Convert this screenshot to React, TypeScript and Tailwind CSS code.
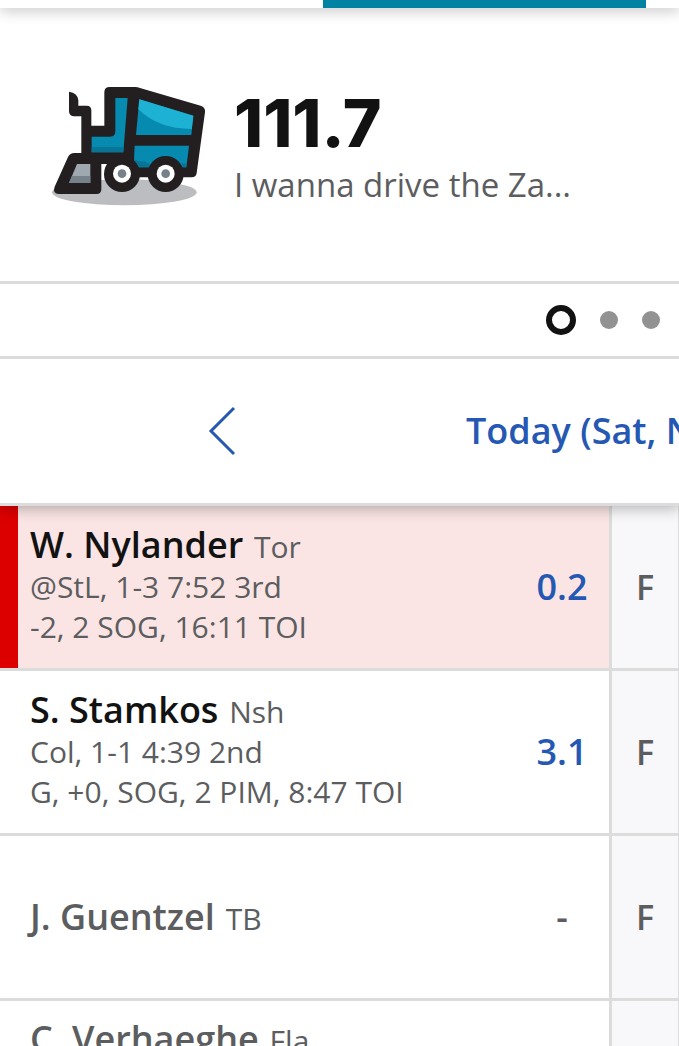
import React from "react";

type Player = {
  name: string;
  team: string;
  game?: string;
  stats?: string;
  points: string;
  position: string;
  flagged?: boolean;
  started?: boolean;
};

const players: Player[] = [
  {
    name: "W. Nylander",
    team: "Tor",
    game: "@StL, 1-3 7:52 3rd",
    stats: "-2, 2 SOG, 16:11 TOI",
    points: "0.2",
    position: "F",
    flagged: true,
    started: true,
  },
  {
    name: "S. Stamkos",
    team: "Nsh",
    game: "Col, 1-1 4:39 2nd",
    stats: "G, +0, SOG, 2 PIM, 8:47 TOI",
    points: "3.1",
    position: "F",
    started: true,
  },
  { name: "J. Guentzel", team: "TB", points: "-", position: "F" },
];

function IceResurfacer() {
  return (
    <svg viewBox="0 0 540 420" className="h-[140px] w-[180px] shrink-0" aria-hidden="true">
      <ellipse cx="253" cy="352" rx="217" ry="39" fill="#bcbdc0" />
      <path
        fill="#231f20"
        d="M87 50Q113 53 115 76V92H140Q154 92 154 106V152H193V52Q193 36 209 36H286Q293 36 300 39L482 92Q497 97 495 112L470 294Q468 307 455 307H240L200 267H184V343Q184 357 170 357H56Q37 355 44 335L84 246Q90 234 103 234H124V124H101Q87 122 87 108Z"
      />
      <path fill="#078aaf" d="M226 69H263L250 232H155V185H210Q226 185 226 169Z" />
      <path fill="#087596" d="M155 216H251L250 232H155Z" />
      <path fill="#078aaf" d="M298 73L460 122L454 180H288Z" />
      <path fill="#1db2d3" d="M298 73L460 122L455 162Q355 162 295 103Z" />
      <path fill="#078aaf" d="M284 212H447L439 277H281Z" />
      <path fill="#087596" d="M282 253Q298 262 315 259L340 277H281Z" />
      <path fill="#087596" d="M425 264Q432 267 440 264L439 277H425Z" />
      <circle cx="246" cy="297" r="54" fill="#231f20" />
      <circle cx="377" cy="297" r="54" fill="#231f20" />
      <circle cx="246" cy="296" r="27" fill="#fff" />
      <circle cx="377" cy="296" r="27" fill="#fff" />
      <circle cx="246" cy="296" r="13" fill="#76818a" />
      <circle cx="377" cy="296" r="13" fill="#76818a" />
      <path fill="#9fa8af" d="M111 267H151V324H87Z" />
      <path fill="#76818a" d="M96 303H151V324H87Z" />
    </svg>
  );
}

function PlayerRow({ player }: { player: Player }) {
  return (
    <tr className={player.flagged ? "bg-[#fae5e4]" : "bg-white"}>
      <td className="border-b-3 border-[#dcdcdd] p-0">
        <div className="flex h-[162px] items-stretch">
          <div className={player.flagged ? "mr-3 w-[18px] bg-[#dd0000]" : "mr-3 w-[18px]"} />
          <div className="flex flex-col justify-center whitespace-nowrap">
            <div className="text-[30px] leading-[41px]">
              <a
                href="#player"
                className={
                  player.started
                    ? "mr-[3px] text-[36px] font-semibold text-[#121213]"
                    : "mr-[3px] text-[36px] font-semibold"
                }
              >
                {player.name}
              </a>{" "}
              <span>{player.team}</span>
            </div>
            {player.game && (
              <div className="pb-1 text-[30px] leading-[40px]">
                <div>{player.game}</div>
                <div>{player.stats}</div>
              </div>
            )}
          </div>
        </div>
      </td>
      <td
        className={
          player.started
            ? "border-r-3 border-b-3 border-[#dcdcdd] p-0 text-center text-[36px] font-semibold text-[#2558b3]"
            : "border-r-3 border-b-3 border-[#dcdcdd] p-0 text-center text-[36px] font-semibold"
        }
      >
        {player.points}
      </td>
      <td className="border-r border-b-3 border-[#dcdcdd] bg-[#f8f8fb] p-0 text-center text-[34px] font-semibold">
        {player.position}
      </td>
    </tr>
  );
}

export default function App() {
  return (
    <main className="h-screen overflow-hidden bg-white font-['Open_Sans',sans-serif] text-[#5c5d5f]">
      <div className="relative flex h-2 justify-end bg-white pr-[33px] shadow-[0_2px_14px_rgba(0,0,0,0.3)]">
        <div className="w-[323px] bg-[#0083a2]" />
      </div>

      <header className="flex h-[276px] items-center gap-[14px] border-b-3 border-[#dcdcdd] pl-10">
        <IceResurfacer />
        <div className="min-w-0 pt-1">
          <div className="font-['Inter',sans-serif] text-[66px] leading-[76px] font-extrabold text-[#121213]">
            111.7
          </div>
          <h1 className="text-[33px] leading-[48px] whitespace-nowrap">I wanna drive the Za...</h1>
        </div>
      </header>

      <div className="flex h-[75px] items-center justify-end gap-6 border-b-3 border-[#dcdcdd] pr-[19px]">
        <button aria-label="Matchup 1" className="size-[30px] rounded-full border-6 border-[#121213]" />
        <button aria-label="Matchup 2" className="size-[18px] rounded-full bg-[#929292]" />
        <button aria-label="Matchup 3" className="size-[18px] rounded-full bg-[#929292]" />
      </div>

      <nav className="relative flex h-[147px] items-center border-b-3 border-[#dcdcdd] bg-white pl-[206px] text-[#2558b3] shadow-[0_2px_14px_rgba(0,0,0,0.3)] [clip-path:inset(0_0_-24px_0)]">
        <button aria-label="Previous day" className="shrink-0">
          <svg viewBox="0 0 30 54" className="h-[54px] w-[30px]" fill="none" stroke="currentColor" strokeWidth="3">
            <path d="M28 4L5 27L28 50" />
          </svg>
        </button>
        <button className="ml-[230px] shrink-0 text-[36px] font-semibold whitespace-nowrap">
          Today (Sat, Nov 2)
        </button>
      </nav>

      <table className="w-full table-fixed border-separate border-spacing-0">
        <colgroup>
          <col />
          <col className="w-[97px]" />
          <col className="w-[67px]" />
        </colgroup>
        <tbody>
          {players.map((player) => (
            <PlayerRow key={player.name} player={player} />
          ))}
          <tr className="h-[165px] align-top">
            <td className="p-0 pt-[17px] pl-[30px] text-[30px] leading-[41px] whitespace-nowrap">
              <a href="#player" className="mr-[3px] text-[36px] font-semibold">
                C. Verhaeghe
              </a>{" "}
              <span>Fla</span>
            </td>
            <td className="border-r-3 border-[#dcdcdd]" />
            <td className="border-r border-[#dcdcdd] bg-[#f8f8fb]" />
          </tr>
        </tbody>
      </table>
    </main>
  );
}
